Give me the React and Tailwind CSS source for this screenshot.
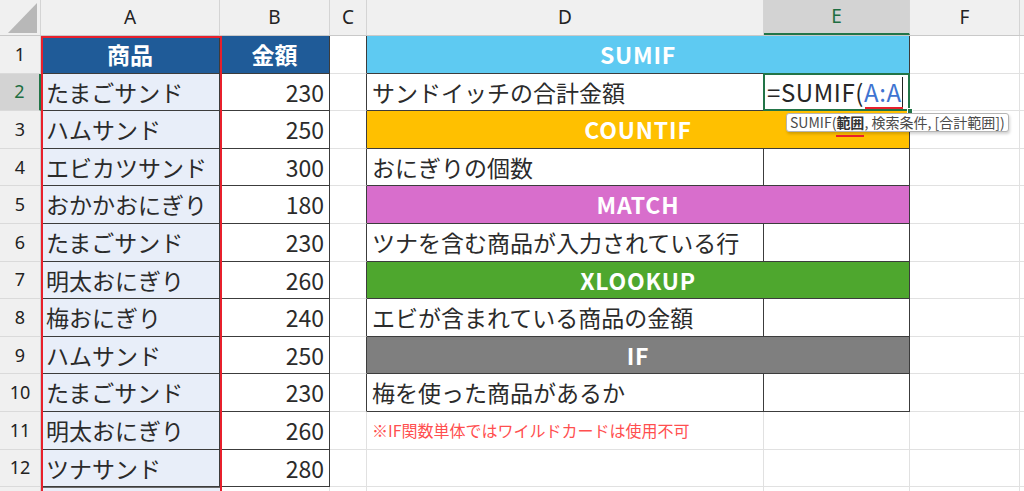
const jp = "font-['Noto_Sans_CJK_JP','Noto_Sans',sans-serif]";
const ui = "font-['Noto_Sans','Noto_Sans_CJK_JP',sans-serif]";

const cols = [
  { key: "A", w: "w-[179px]" },
  { key: "B", w: "w-[110px]" },
  { key: "C", w: "w-[37px]" },
  { key: "D", w: "w-[397px]" },
  { key: "E", w: "w-[146px]" },
  { key: "F", w: "w-[110px]" },
];

const rows = [
  { a: "商品", b: "金額", head: true, band: { label: "SUMIF", bg: "bg-[#5ecaf2]" } },
  { a: "たまごサンド", b: "230", d: "サンドイッチの合計金額", formula: true },
  { a: "ハムサンド", b: "250", band: { label: "COUNTIF", bg: "bg-[#ffc000]" } },
  { a: "エビカツサンド", b: "300", d: "おにぎりの個数" },
  { a: "おかかおにぎり", b: "180", band: { label: "MATCH", bg: "bg-[#d86ecc]" } },
  { a: "たまごサンド", b: "230", d: "ツナを含む商品が入力されている行" },
  { a: "明太おにぎり", b: "260", band: { label: "XLOOKUP", bg: "bg-[#4ea72e]" } },
  { a: "梅おにぎり", b: "240", d: "エビが含まれている商品の金額" },
  { a: "ハムサンド", b: "250", band: { label: "IF", bg: "bg-[#7f7f7f]" } },
  { a: "たまごサンド", b: "230", d: "梅を使った商品があるか" },
  { a: "明太おにぎり", b: "260", note: true },
  { a: "ツナサンド", b: "280" },
];

function Formula() {
  return (
    <div className="relative w-[146px] shrink-0 h-full border-r border-b border-[#3c3c3c]">
      <div className="absolute -left-px -top-px -right-px -bottom-px border-2 border-[#227447] z-10" />
      <div className="absolute right-[-4px] bottom-[-4px] w-[6px] h-[6px] bg-[#227447] border border-white z-20" />
      <div className={`h-full flex items-center pl-[3px] text-[24px] tracking-[0.6px] text-[#262626] whitespace-nowrap ${jp}`}>
        <span>=SUMIF(</span>
        <span className="relative text-[#3f74d1]">
          A:A
          <span className="absolute left-[1px] right-[-1px] bottom-[1px] h-[2px] bg-[#e8202c]" />
        </span>
        <span className="w-px h-[30px] bg-[#222]" />
      </div>
      <div className="absolute left-[22px] top-[39px] z-30 bg-white border border-[#b5b5b5] rounded-[3px] shadow-[1px_2px_3px_rgba(0,0,0,0.18)] px-[3px] h-[19px] flex items-center whitespace-nowrap">
        <span className={`text-[14px] leading-none text-[#4a4a4a] ${jp}`}>
          SUMIF(
          <span className="relative font-bold text-[#333]">
            範囲
            <span className="absolute left-0 right-0 bottom-[-5px] h-[2px] bg-[#e8202c]" />
          </span>
          , 検索条件, [合計範囲])
        </span>
      </div>
    </div>
  );
}

function Row({ r, i }) {
  const n = i + 1;
  const inTable = n <= 10;
  const selected = n === 2;
  const dark = "border-[#3c3c3c]";
  return (
    <div className="flex h-[37.6px]">
      <div
        className={`w-[41px] shrink-0 flex items-center justify-center border-b border-[#dadada] text-[18px] ${ui} ${
          selected
            ? "bg-[#d3d3d3] text-[#1e6e42] border-r-2 border-r-[#227447]"
            : "bg-[#f0f0f0] text-[#222] border-r border-r-[#cfcfcf]"
        }`}
      >
        {n}
      </div>
      <div
        className={`w-[179px] shrink-0 flex items-center border-r border-b ${dark} ${jp} ${
          r.head
            ? "bg-[#1f5b98] justify-center text-white font-bold text-[23px]"
            : "bg-[#e8eef9] pl-[5px] text-[23px] text-[#2b2b2b]"
        }`}
      >
        {r.a}
      </div>
      <div
        className={`w-[110px] shrink-0 flex items-center border-r border-b ${dark} ${jp} ${
          r.head
            ? "bg-[#1f5b98] justify-center text-white font-bold text-[23px]"
            : "bg-white justify-end pr-[5px] text-[23px] text-[#2b2b2b]"
        }`}
      >
        {r.b}
      </div>
      <div
        className={`w-[37px] shrink-0 border-b border-[#e1e1e1] border-r ${
          inTable ? "border-r-[#3c3c3c]" : "border-r-[#e1e1e1]"
        }`}
      />
      {r.band ? (
        <div
          className={`w-[543px] shrink-0 flex items-center justify-center border-r border-b ${dark} ${r.band.bg} text-white font-bold text-[23px] tracking-[0.8px] ${jp}`}
        >
          {r.band.label}
        </div>
      ) : inTable ? (
        <>
          <div
            className={`w-[397px] shrink-0 flex items-center pl-[5px] border-r border-b ${dark} text-[23px] text-[#2b2b2b] whitespace-nowrap ${jp}`}
          >
            {r.d}
          </div>
          {r.formula ? (
            <Formula />
          ) : (
            <div className={`w-[146px] shrink-0 border-r border-b ${dark}`} />
          )}
        </>
      ) : (
        <>
          <div
            className={`w-[397px] shrink-0 flex items-center pl-[5px] border-r border-b border-[#e1e1e1] text-[16px] text-[#ff4f4f] whitespace-nowrap ${jp}`}
          >
            {r.note ? "※IF関数単体ではワイルドカードは使用不可" : ""}
          </div>
          <div className="w-[146px] shrink-0 border-r border-b border-[#e1e1e1]" />
        </>
      )}
      <div className="w-[110px] shrink-0 border-r border-b border-[#e1e1e1]" />
      <div className="flex-1 border-b border-[#e1e1e1]" />
    </div>
  );
}

export default function App() {
  return (
    <div className="relative w-[1024px] h-[491px] overflow-hidden bg-white">
      {/* column headers */}
      <div className="flex h-[36px] bg-[#f0f0f0] border-b border-[#c9c9c9]">
        <div className="w-[41px] shrink-0 relative border-r border-[#d4d4d4]">
          <svg className="absolute left-0 top-0" width="41" height="36" viewBox="0 0 41 36">
            <polygon points="37,3 37,33 8,33" fill="#b8b8b8" />
          </svg>
        </div>
        {cols.map((c) => (
          <div
            key={c.key}
            className={`${c.w} shrink-0 flex items-center justify-center text-[19px] border-r border-[#d4d4d4] ${ui} ${
              c.key === "E"
                ? "bg-[#d3d3d3] text-[#1e6e42] border-b-2 border-b-[#227447]"
                : "text-[#222]"
            }`}
          >
            {c.key}
          </div>
        ))}
        <div className="flex-1" />
      </div>

      {rows.map((r, i) => (
        <Row key={i} r={r} i={i} />
      ))}

      {/* partial row 13 */}
      <div className="flex h-[10px]">
        <div className="w-[41px] shrink-0 bg-[#f0f0f0] border-r border-[#cfcfcf]" />
        <div className="w-[179px] shrink-0 bg-[#e8eef9] border-t border-[#6b6b6b]" />
        <div className="w-[110px] shrink-0 border-r border-[#e1e1e1]" />
        <div className="w-[37px] shrink-0 border-r border-[#e1e1e1]" />
        <div className="w-[397px] shrink-0 border-r border-[#e1e1e1]" />
        <div className="w-[146px] shrink-0 border-r border-[#e1e1e1]" />
        <div className="w-[110px] shrink-0 border-r border-[#e1e1e1]" />
      </div>

      {/* selected range outline on column A */}
      <div className="absolute left-[41px] top-[36px] w-[181px] h-[470px] border-2 border-[#e8202c] pointer-events-none" />
    </div>
  );
}
